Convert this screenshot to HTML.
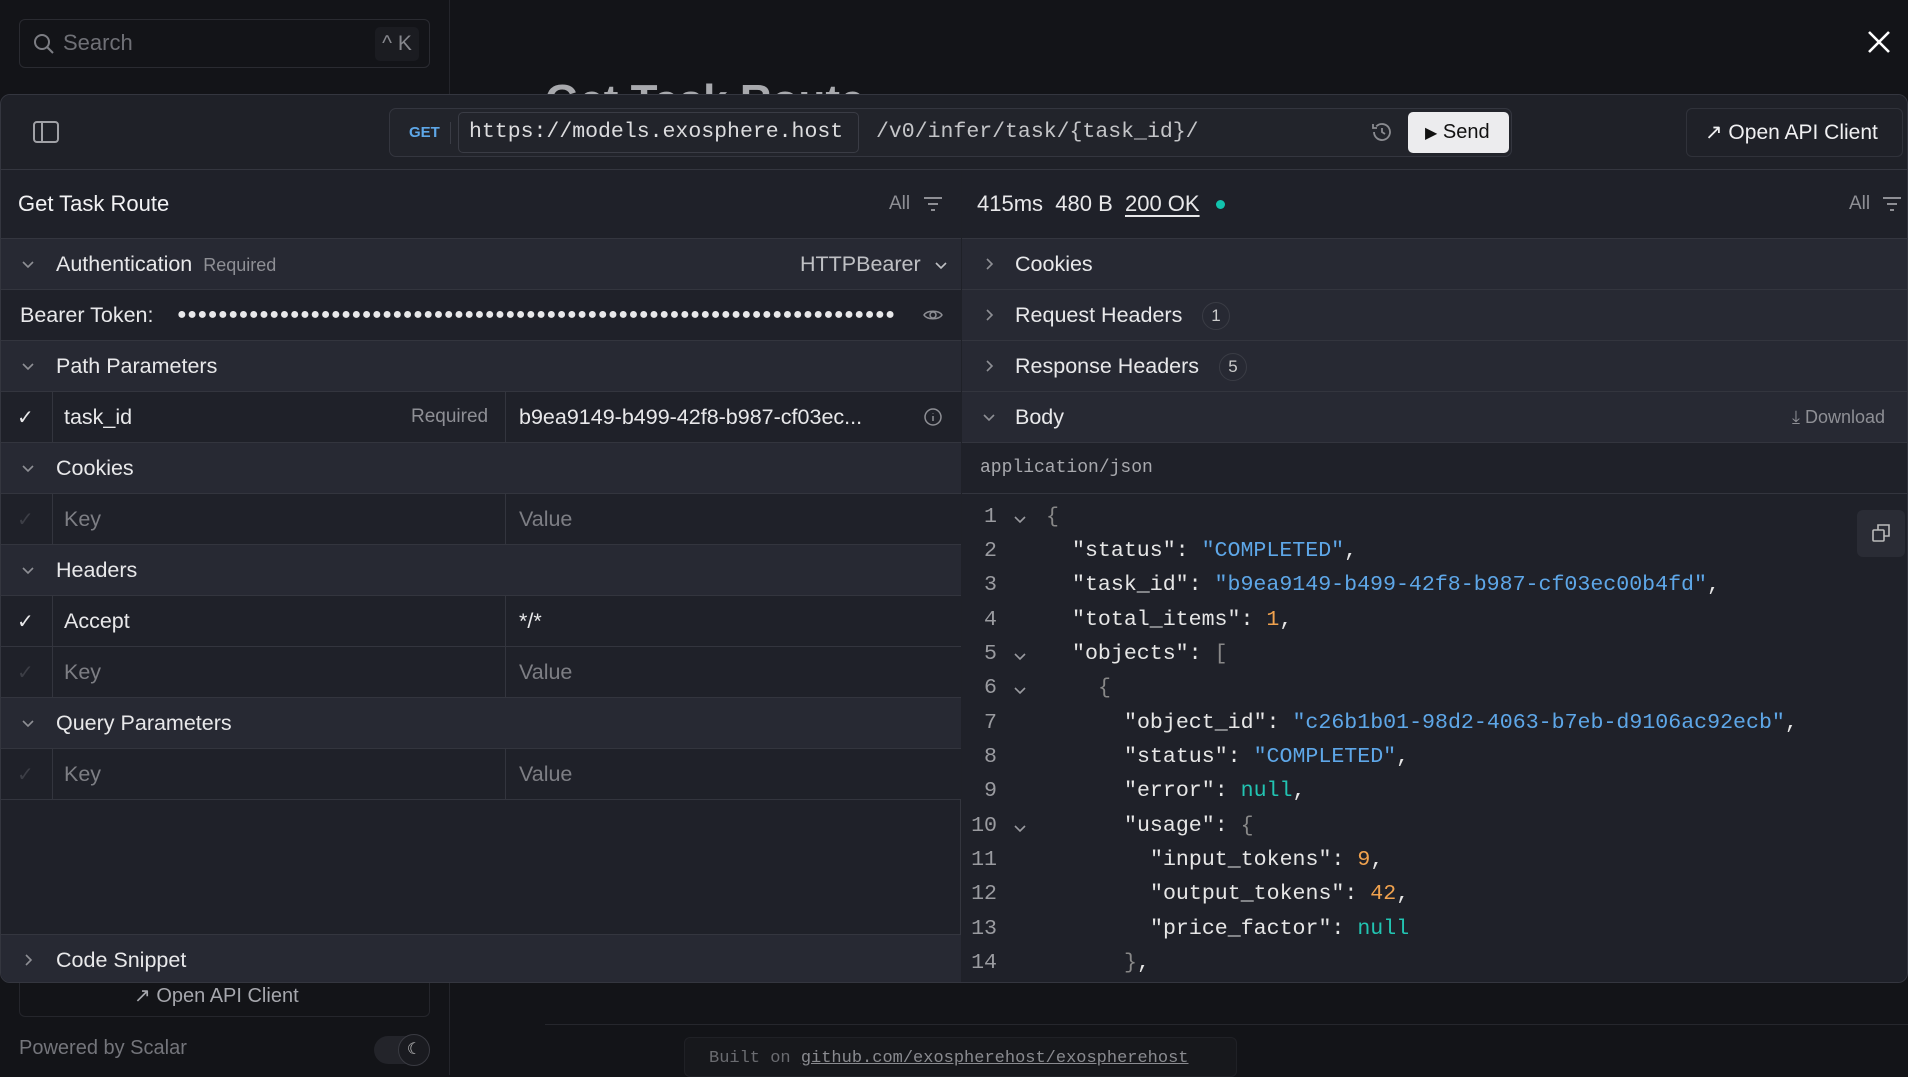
<!DOCTYPE html>
<html><head><meta charset="utf-8"><style>
*{box-sizing:border-box;margin:0;padding:0}
body{width:1908px;height:1075px;background:#131418;font-family:"Liberation Sans",sans-serif;color:#e8e8ea;position:relative;overflow:hidden}
.a{position:absolute}
.mono{font-family:"Liberation Mono",monospace}
.row{position:absolute;left:0;height:51px;border-bottom:1px solid #33353e;display:flex;align-items:center;font-size:21.5px}
.sec{background:#272933}
.dat{background:#1f2129}
.chev{position:absolute;left:20px;top:18px;width:14px;height:14px}
svg{display:block}
.cl{position:absolute;height:34px;line-height:34px;font-family:"Liberation Mono",monospace;font-size:21.6px;color:#e6e6e6;white-space:pre}
.s{color:#5ea7e8}.n{color:#f0a24e}.nl{color:#22c4b2}.p{color:#888}
.ln{position:absolute;width:40px;text-align:right;left:957px;font-family:"Liberation Mono",monospace;font-size:21.6px;color:#9a9ba0;line-height:34px}
.cv{position:absolute;left:1013px;width:14px;height:14px}
</style></head><body>
<div class="a" style="left:0;top:0;width:450px;height:1075px;border-right:1px solid #24252b"></div>
<div class="a" style="left:19px;top:19px;width:411px;height:49px;border:1px solid #2a2b31;border-radius:6px"></div>
<svg class="a" style="left:32px;top:32px" width="24" height="24" viewBox="0 0 24 24" fill="none" stroke="#7c7d83" stroke-width="2"><circle cx="10" cy="10" r="7"/><path d="M15 15l6 6"/></svg>
<div class="a" style="left:63px;top:30px;font-size:22px;color:#6f7076">Search</div>
<div class="a" style="left:375px;top:27px;width:44px;height:34px;background:#1b1c21;border-radius:5px;font-size:21px;color:#85868c;text-align:center;line-height:34px">^ K</div>
<svg class="a" style="left:1866px;top:29px" width="26" height="26" viewBox="0 0 26 26" stroke="#fff" stroke-width="2.6"><path d="M3 3l20 20M23 3L3 23"/></svg>
<div class="a" style="left:545px;top:76px;font-size:44px;font-weight:bold;color:#a8a9ad">Get Task Route</div>
<div class="a" style="left:545px;top:1024px;width:1363px;height:1px;background:#26272d"></div>
<div class="a" style="left:19px;top:983px;width:411px;height:34px;border:1px solid #25262c;border-top:none;border-radius:0 0 6px 6px"></div>
<div class="a" style="left:134px;top:983px;font-size:20px;color:#a6a7ad">↗ Open API Client</div>
<div class="a" style="left:19px;top:1037px;font-size:20px;color:#74757b">Powered by Scalar</div>
<div class="a" style="left:374px;top:1036px;width:56px;height:28px;background:#23242a;border-radius:14px"></div>
<div class="a" style="left:398px;top:1034px;width:32px;height:32px;background:#1a1b20;border:1px solid #3a3b42;border-radius:50%;color:#ccc;font-size:16px;text-align:center;line-height:30px">☾</div>
<div class="a" style="left:684px;top:1037px;width:553px;height:40px;background:#17181c;border:1px solid #202126;border-radius:6px"></div>
<div class="a mono" style="left:709px;top:1049px;font-size:17px;color:#6a6b70">Built on <span style="color:#8a8b90;text-decoration:underline">github.com/exospherehost/exospherehost</span></div>

<div class="a" style="left:0;top:94px;width:1908px;height:889px;background:#1f2128;border:1px solid #34363f;border-radius:10px;overflow:hidden">
 <div class="a" style="left:0;top:0;width:1908px;height:75px;border-bottom:1px solid #34363f;background:#1f2128"></div>
 <svg class="a" style="left:31px;top:25px" width="28" height="24" viewBox="0 0 28 24" fill="none" stroke="#a0a1a6" stroke-width="2"><rect x="2" y="2" width="24" height="20" rx="3"/><path d="M10 2v20"/></svg>
 <div class="a" style="left:388px;top:13px;width:1123px;height:49px;border:1px solid #34363f;border-radius:7px;background:#22242b"></div>
 <div class="a" style="left:408px;top:29px;font-size:15px;font-weight:bold;color:#5ea7e8">GET</div>
 <div class="a" style="left:449px;top:27px;width:1px;height:22px;background:#3a3c45"></div>
 <div class="a mono" style="left:457px;top:17px;width:401px;height:41px;border:1px solid #3a3c45;border-radius:5px;font-size:21.5px;line-height:39px;padding-left:10px;color:#dcdcde">https://models.exosphere.host</div>
 <div class="a mono" style="left:875px;top:17px;font-size:21.5px;line-height:41px;color:#c4c5c8">/v0/infer/task/{task_id}/</div>
 <svg class="a" style="left:1369px;top:25px" width="24" height="24" viewBox="0 0 24 24" fill="none" stroke="#8a8b90" stroke-width="1.8"><path d="M4 12a8 8 0 1 0 2.3-5.6"/><path d="M3 4v4h4"/><path d="M12 8v4l3 2"/></svg>
 <div class="a" style="left:1407px;top:17px;width:101px;height:41px;background:#ececee;border-radius:5px;color:#111;font-size:20px;line-height:41px;padding-left:17px"><span style="font-size:16px">▶</span> Send</div>
 <div class="a" style="left:1685px;top:13px;width:217px;height:49px;border:1px solid #30323a;border-radius:6px;font-size:21px;line-height:47px;padding-left:18px;color:#f0f0f2">↗ Open API Client</div>

 <div class="a" style="left:0;top:75px;width:960px;height:814px;background:#1f2129;border-right:1px solid #34363f">
  <div class="row" style="top:0;width:960px;height:69px;background:#1f2129;border-bottom:1px solid #34363f"><span style="position:absolute;left:17px;font-size:22px;color:#f2f2f4">Get Task Route</span><span style="position:absolute;left:888px;color:#8e8f95;font-size:19px">All</span><svg class="a" style="left:922px;top:25px" width="20" height="18" viewBox="0 0 20 18" stroke="#8e8f95" stroke-width="2"><path d="M1 3h18M5 9h10M8 15h4"/></svg></div>
  <div class="row sec" style="top:69px;width:960px"><svg class="chev" viewBox="0 0 14 14" fill="none" stroke="#8e8f95" stroke-width="1.6"><path d="M2 5l5 5 5-5"/></svg><span style="position:absolute;left:55px">Authentication <span style="color:#8e8f95;font-size:18px">&nbsp;Required</span></span><span style="position:absolute;left:799px;color:#bfc0c4">HTTPBearer</span><svg class="a" style="left:933px;top:19px" width="14" height="14" viewBox="0 0 14 14" fill="none" stroke="#bfc0c4" stroke-width="1.6"><path d="M2 5l5 5 5-5"/></svg></div>
  <div class="row dat" style="top:120px;width:960px"><span style="position:absolute;left:19px">Bearer Token:</span><span style="position:absolute;left:176px;width:720px;overflow:hidden;white-space:nowrap;font-size:16px;letter-spacing:0.6px">●●●●●●●●●●●●●●●●●●●●●●●●●●●●●●●●●●●●●●●●●●●●●●●●●●●●●●●●●●●●●●●●●●●●●●</span><svg class="a" style="left:922px;top:16px" width="20" height="18" viewBox="0 0 20 18" fill="none" stroke="#8e8f95" stroke-width="1.5"><path d="M1 9c3-5 15-5 18 0c-3 5-15 5-18 0z"/><circle cx="10" cy="9" r="3"/></svg></div>
  <div class="row sec" style="top:171px;width:960px"><svg class="chev" viewBox="0 0 14 14" fill="none" stroke="#8e8f95" stroke-width="1.6"><path d="M2 5l5 5 5-5"/></svg><span style="position:absolute;left:55px">Path Parameters</span></div>
  <div class="row dat" style="top:222px;width:960px"><span style="position:absolute;left:16px;font-size:20px">✓</span><div class="a" style="left:51px;top:0;width:1px;height:51px;background:#33353e"></div><span style="position:absolute;left:63px">task_id</span><span style="position:absolute;left:410px;color:#8e8f95;font-size:19px">Required</span><div class="a" style="left:504px;top:0;width:1px;height:51px;background:#33353e"></div><span style="position:absolute;left:518px">b9ea9149-b499-42f8-b987-cf03ec...</span><svg class="a" style="left:922px;top:15px" width="20" height="20" viewBox="0 0 20 20" fill="none" stroke="#8e8f95" stroke-width="1.5"><circle cx="10" cy="10" r="8"/><path d="M10 9v5M10 6v0.5"/></svg></div>
  <div class="row sec" style="top:273px;width:960px"><svg class="chev" viewBox="0 0 14 14" fill="none" stroke="#8e8f95" stroke-width="1.6"><path d="M2 5l5 5 5-5"/></svg><span style="position:absolute;left:55px">Cookies</span></div>
  <div class="row dat" style="top:324px;width:960px"><span style="position:absolute;left:16px;font-size:20px;color:#3c3e46">✓</span><div class="a" style="left:51px;top:0;width:1px;height:51px;background:#33353e"></div><span style="position:absolute;left:63px;color:#7d7e84">Key</span><div class="a" style="left:504px;top:0;width:1px;height:51px;background:#33353e"></div><span style="position:absolute;left:518px;color:#7d7e84">Value</span></div>
  <div class="row sec" style="top:375px;width:960px"><svg class="chev" viewBox="0 0 14 14" fill="none" stroke="#8e8f95" stroke-width="1.6"><path d="M2 5l5 5 5-5"/></svg><span style="position:absolute;left:55px">Headers</span></div>
  <div class="row dat" style="top:426px;width:960px"><span style="position:absolute;left:16px;font-size:20px">✓</span><div class="a" style="left:51px;top:0;width:1px;height:51px;background:#33353e"></div><span style="position:absolute;left:63px">Accept</span><div class="a" style="left:504px;top:0;width:1px;height:51px;background:#33353e"></div><span style="position:absolute;left:518px">*/*</span></div>
  <div class="row dat" style="top:477px;width:960px"><span style="position:absolute;left:16px;font-size:20px;color:#3c3e46">✓</span><div class="a" style="left:51px;top:0;width:1px;height:51px;background:#33353e"></div><span style="position:absolute;left:63px;color:#7d7e84">Key</span><div class="a" style="left:504px;top:0;width:1px;height:51px;background:#33353e"></div><span style="position:absolute;left:518px;color:#7d7e84">Value</span></div>
  <div class="row sec" style="top:528px;width:960px"><svg class="chev" viewBox="0 0 14 14" fill="none" stroke="#8e8f95" stroke-width="1.6"><path d="M2 5l5 5 5-5"/></svg><span style="position:absolute;left:55px">Query Parameters</span></div>
  <div class="row dat" style="top:579px;width:960px"><span style="position:absolute;left:16px;font-size:20px;color:#3c3e46">✓</span><div class="a" style="left:51px;top:0;width:1px;height:51px;background:#33353e"></div><span style="position:absolute;left:63px;color:#7d7e84">Key</span><div class="a" style="left:504px;top:0;width:1px;height:51px;background:#33353e"></div><span style="position:absolute;left:518px;color:#7d7e84">Value</span></div>
  <div class="row sec" style="top:764px;width:960px;border-top:1px solid #34363f;height:52px"><svg class="chev" viewBox="0 0 14 14" fill="none" stroke="#8e8f95" stroke-width="1.6"><path d="M5 2l5 5-5 5"/></svg><span style="position:absolute;left:55px">Code Snippet</span></div>
 </div>

 <div class="a" style="left:961px;top:75px;width:947px;height:814px;background:#1f2129">
  <div class="row" style="top:0;width:947px;height:69px;border-bottom:1px solid #34363f"><span style="position:absolute;left:15px;font-size:22px">415ms&nbsp; 480 B&nbsp; <span style="text-decoration:underline;text-underline-offset:4px">200 OK</span></span><span class="a" style="left:254px;top:30px;width:9px;height:9px;border-radius:50%;background:#12c3ad"></span><span style="position:absolute;left:887px;color:#8e8f95;font-size:19px">All</span><svg class="a" style="left:920px;top:25px" width="20" height="18" viewBox="0 0 20 18" stroke="#8e8f95" stroke-width="2"><path d="M1 3h18M5 9h10M8 15h4"/></svg></div>
  <div class="row sec" style="top:69px;width:947px"><svg class="chev" style="left:20px" viewBox="0 0 14 14" fill="none" stroke="#8e8f95" stroke-width="1.6"><path d="M5 2l5 5-5 5"/></svg><span style="position:absolute;left:53px">Cookies</span></div>
  <div class="row sec" style="top:120px;width:947px"><svg class="chev" style="left:20px" viewBox="0 0 14 14" fill="none" stroke="#8e8f95" stroke-width="1.6"><path d="M5 2l5 5-5 5"/></svg><span style="position:absolute;left:53px">Request Headers</span><span class="a" style="left:240px;top:12px;width:28px;height:28px;border:1px solid #3a3c45;border-radius:50%;text-align:center;line-height:26px;font-size:17px;color:#ccc">1</span></div>
  <div class="row sec" style="top:171px;width:947px"><svg class="chev" style="left:20px" viewBox="0 0 14 14" fill="none" stroke="#8e8f95" stroke-width="1.6"><path d="M5 2l5 5-5 5"/></svg><span style="position:absolute;left:53px">Response Headers</span><span class="a" style="left:257px;top:12px;width:28px;height:28px;border:1px solid #3a3c45;border-radius:50%;text-align:center;line-height:26px;font-size:17px;color:#ccc">5</span></div>
  <div class="row sec" style="top:222px;width:947px"><svg class="chev" style="left:20px" viewBox="0 0 14 14" fill="none" stroke="#8e8f95" stroke-width="1.6"><path d="M2 5l5 5 5-5"/></svg><span style="position:absolute;left:53px">Body</span><span style="position:absolute;left:830px;color:#8e8f95;font-size:18px">⤓ Download</span></div>
  <div class="row" style="top:273px;width:947px;background:#1f2129"><span class="mono" style="position:absolute;left:18px;font-size:18px;color:#a8a9ae">application/json</span></div>
  <div class="a" style="left:895px;top:340px;width:48px;height:47px;background:#2a2c35;border-radius:6px"></div>
  <svg class="a" style="left:909px;top:353px" width="20" height="20" viewBox="0 0 20 20" fill="none" stroke="#bbb" stroke-width="1.6"><rect x="2" y="7" width="11" height="11" rx="1"/><path d="M7 7V2h11v11h-5"/></svg>
 </div>
</div>

<!-- code (page coords) -->
<div class="ln" style="top:500px">1</div><div class="ln" style="top:534px">2</div><div class="ln" style="top:568px">3</div><div class="ln" style="top:603px">4</div><div class="ln" style="top:637px">5</div><div class="ln" style="top:671px">6</div><div class="ln" style="top:706px">7</div><div class="ln" style="top:740px">8</div><div class="ln" style="top:774px">9</div><div class="ln" style="top:809px">10</div><div class="ln" style="top:843px">11</div><div class="ln" style="top:877px">12</div><div class="ln" style="top:912px">13</div><div class="ln" style="top:946px">14</div>
<svg class="cv" style="top:512px" viewBox="0 0 14 14" fill="none" stroke="#9a9ba0" stroke-width="1.6"><path d="M2 5l5 5 5-5"/></svg>
<svg class="cv" style="top:649px" viewBox="0 0 14 14" fill="none" stroke="#9a9ba0" stroke-width="1.6"><path d="M2 5l5 5 5-5"/></svg>
<svg class="cv" style="top:683px" viewBox="0 0 14 14" fill="none" stroke="#9a9ba0" stroke-width="1.6"><path d="M2 5l5 5 5-5"/></svg>
<svg class="cv" style="top:821px" viewBox="0 0 14 14" fill="none" stroke="#9a9ba0" stroke-width="1.6"><path d="M2 5l5 5 5-5"/></svg>
<div class="cl" style="left:1046px;top:500px"><span class="p">{</span></div>
<div class="cl" style="left:1072px;top:534px">"status": <span class="s">"COMPLETED"</span>,</div>
<div class="cl" style="left:1072px;top:568px">"task_id": <span class="s">"b9ea9149-b499-42f8-b987-cf03ec00b4fd"</span>,</div>
<div class="cl" style="left:1072px;top:603px">"total_items": <span class="n">1</span>,</div>
<div class="cl" style="left:1072px;top:637px">"objects": <span class="p">[</span></div>
<div class="cl" style="left:1098px;top:671px"><span class="p">{</span></div>
<div class="cl" style="left:1124px;top:706px">"object_id": <span class="s">"c26b1b01-98d2-4063-b7eb-d9106ac92ecb"</span>,</div>
<div class="cl" style="left:1124px;top:740px">"status": <span class="s">"COMPLETED"</span>,</div>
<div class="cl" style="left:1124px;top:774px">"error": <span class="nl">null</span>,</div>
<div class="cl" style="left:1124px;top:809px">"usage": <span class="p">{</span></div>
<div class="cl" style="left:1150px;top:843px">"input_tokens": <span class="n">9</span>,</div>
<div class="cl" style="left:1150px;top:877px">"output_tokens": <span class="n">42</span>,</div>
<div class="cl" style="left:1150px;top:912px">"price_factor": <span class="nl">null</span></div>
<div class="cl" style="left:1124px;top:946px"><span class="p">}</span>,</div>
</body></html>
